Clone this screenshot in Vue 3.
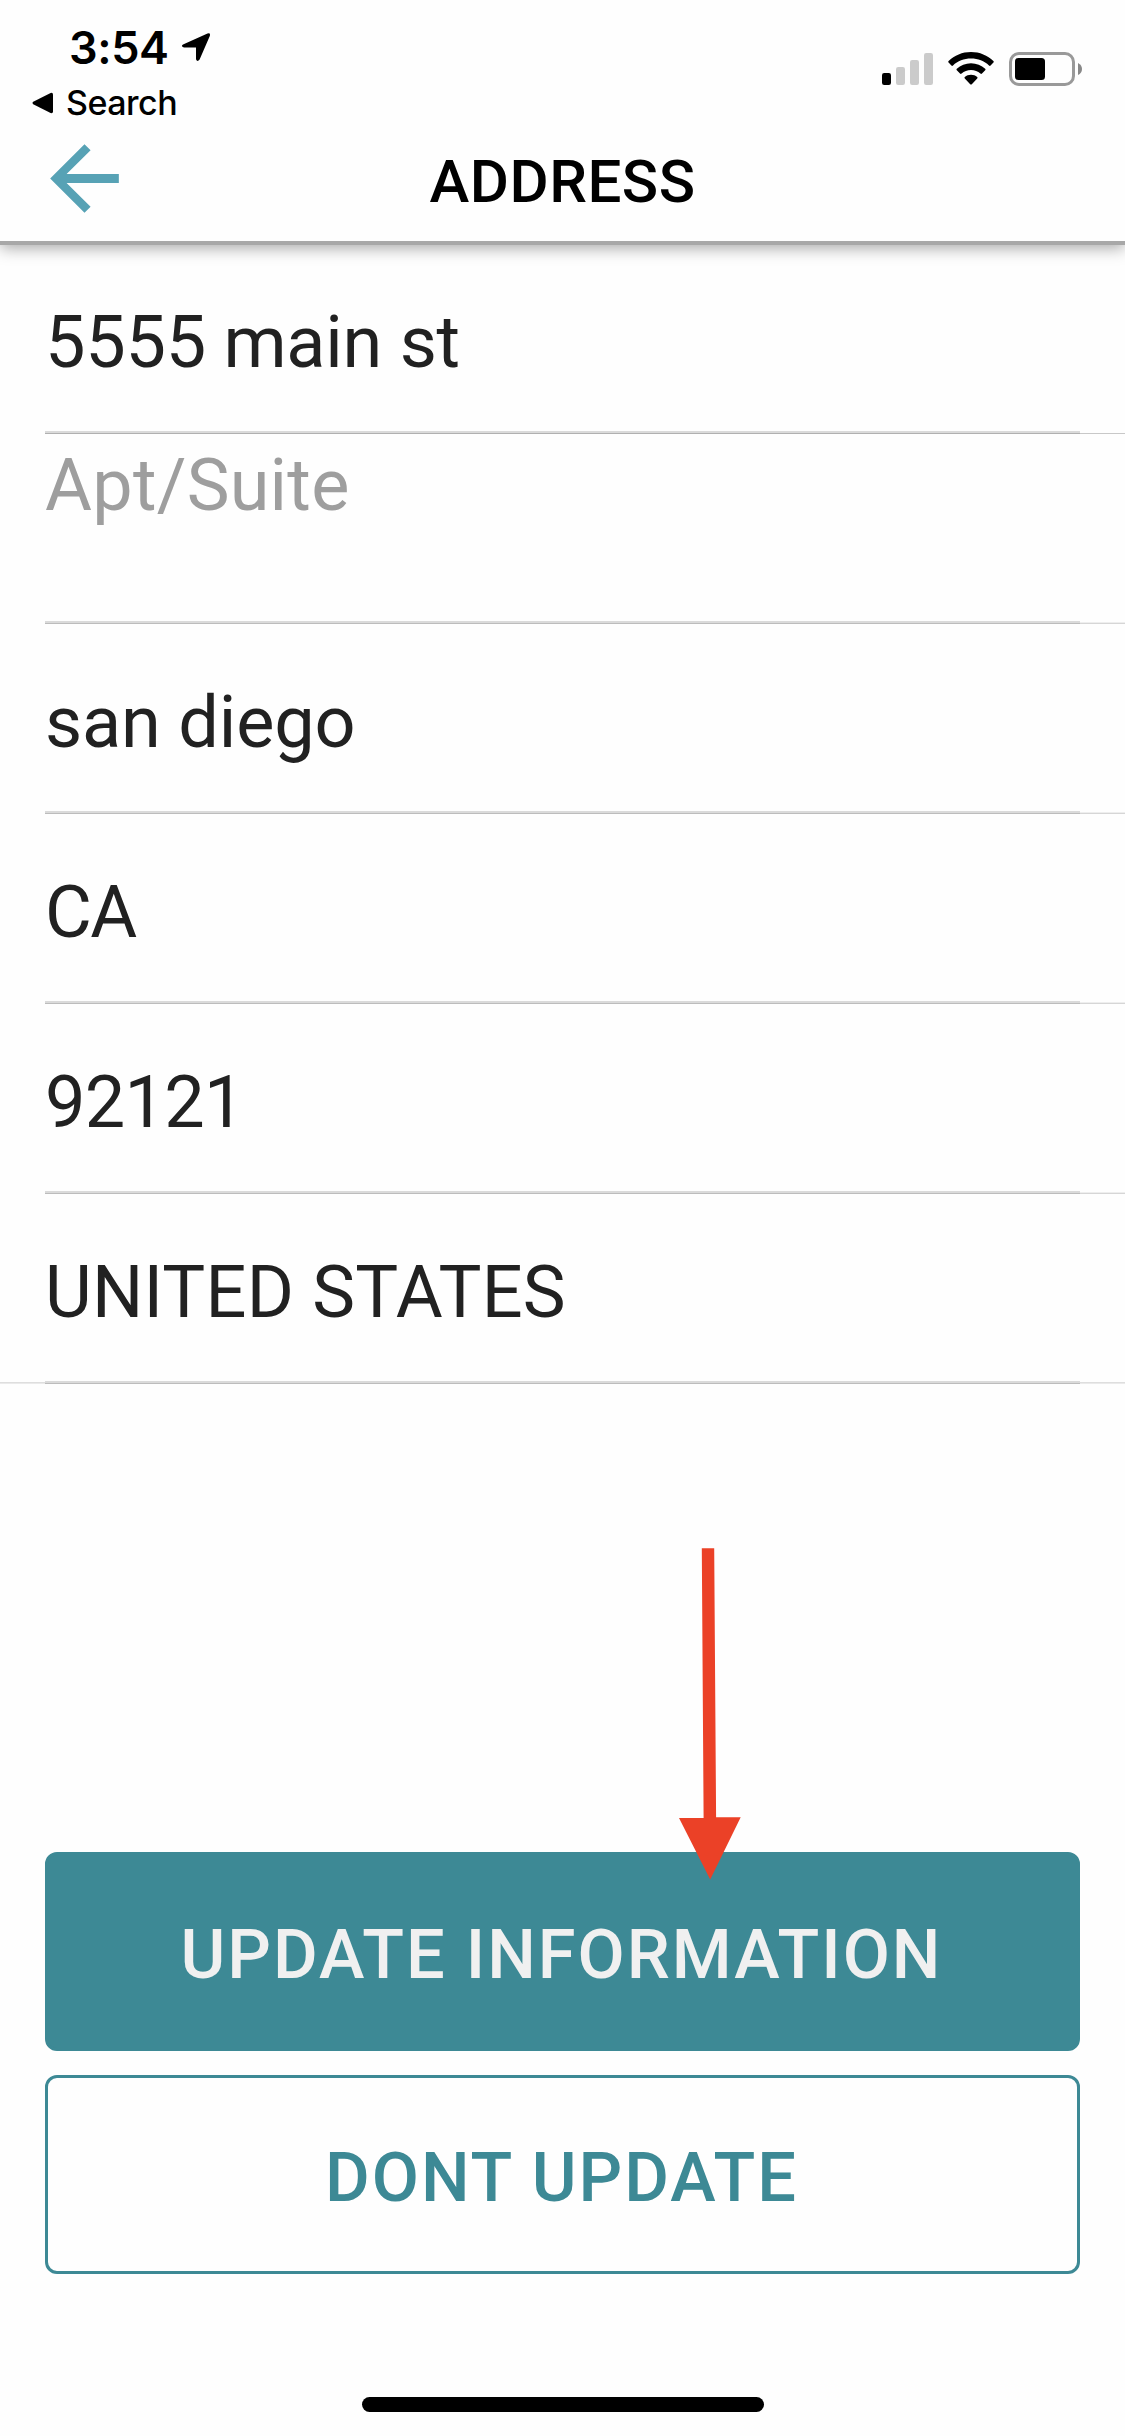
<script setup>
import { reactive } from 'vue'

const fields = reactive([
  { name: 'street', value: '5555 main st', placeholder: 'Address' },
  { name: 'suite', value: '', placeholder: 'Apt/Suite' },
  { name: 'city', value: 'san diego', placeholder: 'City' },
  { name: 'state', value: 'CA', placeholder: 'State' },
  { name: 'zip', value: '92121', placeholder: 'Zip' },
  { name: 'country', value: 'UNITED STATES', placeholder: 'Country' },
])
</script>

<template>
  <div class="screen">
    <header class="header">
      <div class="status-bar">
        <div class="status-left">
          <div class="clock">
            <span class="time">3:54</span>
            <svg class="location" width="30" height="30" viewBox="0 0 30 30">
              <path
                d="M2 12.4 26.5 1.6Q29.8.6 28.8 4L18.6 27.5Q16.2 30.6 15 27.2V15.5H3Q-.6 14.4 2 12.4Z"
              />
            </svg>
          </div>
          <div class="back-app">
            <svg class="triangle" width="22" height="22" viewBox="0 0 22 22">
              <path d="M1.2 9.8 18.6.9Q21 .3 21 2.5v17Q21 21.7 18.6 21.1L1.2 12.2Q-.2 11 1.2 9.8Z" />
            </svg>
            <span class="search">Search</span>
          </div>
        </div>
        <div class="status-right">
          <svg class="signal" width="51" height="34" viewBox="0 0 51 34">
            <rect x="0" y="21" width="9" height="12" rx="2.2" />
            <g fill="#cbcbcb">
              <rect x="14" y="15" width="9" height="18" rx="2.2" />
              <rect x="28" y="8" width="9" height="25" rx="2.2" />
              <rect x="42" y="1" width="9" height="32" rx="2.2" />
            </g>
          </svg>
          <svg class="wifi" width="46" height="34" viewBox="0 0 46 34">
            <path
              d="M23 0C31.7 0 39.6 3.4 45.4 9Q46.2 9.8 45.4 10.6L42.6 13.5Q41.8 14.3 41 13.5C36.3 9.2 30 6.6 23 6.6S9.7 9.2 5 13.5Q4.2 14.3 3.4 13.5L.6 10.6Q-.2 9.8.6 9C6.4 3.4 14.3 0 23 0Z"
            />
            <path
              d="M23 11.2C28.5 11.2 33.4 13.3 37.2 16.7Q38 17.5 37.2 18.3L34 21.6Q33.2 22.3 32.4 21.6C29.9 19.4 26.6 18 23 18S16.1 19.4 13.6 21.6Q12.8 22.3 12 21.6L8.800 18.3Q8 17.5 8.800 16.7C12.6 13.3 17.5 11.2 23 11.2Z"
            />
            <path
              d="M23 22.8C25.5 22.8 27.5 23.6 29.2 24.9Q30 25.7 29.2 26.5L23.8 32.2Q23 33 22.2 32.2L16.8 26.5Q16 25.7 16.8 24.9C18.5 23.6 20.5 22.8 23 22.8Z"
            />
          </svg>
          <svg class="battery" width="74" height="34" viewBox="0 0 74 34">
            <rect x="1.5" y="1.5" width="63" height="31" rx="8.5" fill="none" stroke="#999" stroke-width="3" />
            <rect x="6" y="6" width="30" height="22" rx="3.5" />
            <path d="M69 11Q73 13 73 17T69 23Z" fill="#888" />
          </svg>
        </div>
      </div>
      <div class="nav-bar">
        <button type="button" class="back" aria-label="Back">
          <svg width="103" height="103" viewBox="0 0 24 24">
            <path d="M20 10.93H7.83l5.59-5.53L12 4l-8 8 8 8 1.42-1.4L7.83 13.07H20z" />
          </svg>
        </button>
        <h1 class="title">ADDRESS</h1>
      </div>
    </header>

    <form class="fields" @submit.prevent>
      <label
        v-for="field in fields"
        :key="field.name"
        :class="['row', field.name, { empty: !field.value }]"
      >
        <span class="text">{{ field.value || field.placeholder }}</span>
        <span class="rule"></span>
      </label>
    </form>

    <div class="actions">
      <button type="button" class="btn primary">UPDATE INFORMATION</button>
      <button type="button" class="btn outline">DONT UPDATE</button>
      <svg class="pointer" width="62" height="332" viewBox="0 0 62 332">
        <path d="M22.8.3H35.2L37.1 269.3H61.7L31.2 331.5L0 269.9H24.6Z" />
      </svg>
    </div>

    <div class="home-indicator"></div>
  </div>
</template>

<style>
html,
body {
  margin: 0;
  background: #fefefe;
}
</style>

<style scoped>
.screen {
  display: flex;
  flex-direction: column;
  width: 1125px;
  height: 2436px;
  overflow: hidden;
  background: #fefefe;
  color: #000;
  font-family: Roboto, 'Liberation Sans', sans-serif;
}

.header {
  position: relative;
  z-index: 1;
  box-sizing: border-box;
  flex: none;
  height: 245px;
  border-bottom: 4px solid #a8a8a8;
  background: #fefefe;
  box-shadow: 0 3px 15px rgba(0, 0, 0, 0.35);
}

.status-bar {
  display: flex;
  justify-content: space-between;
  height: 126px;
  font-family: Inter, 'Liberation Sans', sans-serif;
}

.status-left {
  padding: 21px 0 0 32px;
}

.clock {
  display: flex;
  align-items: flex-start;
  height: 54px;
  padding-left: 37px;
  line-height: 54px;
}

.time {
  width: 112px;
  font-size: 45px;
  font-weight: 600;
  letter-spacing: -0.4px;
}

.location {
  margin-top: 11px;
}

.back-app {
  display: flex;
  align-items: center;
  height: 56px;
  line-height: 56px;
}

.search {
  margin-left: 12px;
  font-size: 34px;
  font-weight: 500;
  letter-spacing: -0.5px;
}

.status-right {
  display: flex;
  align-items: flex-start;
  padding: 52px 42px 0 0;
}

.wifi {
  margin-left: 15px;
}

.battery {
  margin-left: 15px;
}

.nav-bar {
  display: grid;
  grid-template-columns: 250px 1fr 250px;
  align-items: center;
  height: 105px;
}

.back {
  width: 103px;
  height: 103px;
  margin-left: 33px;
  padding: 0;
  border: 0;
  background: none;
  fill: #57a2b5;
}

.title {
  margin: 7px 0 0;
  font-size: 60px;
  font-weight: 500;
  line-height: 72px;
  letter-spacing: 0.5px;
  text-align: center;
}

.fields {
  flex: none;
  margin-top: -1px;
}

.row {
  display: flex;
  flex-direction: column;
  justify-content: space-between;
  box-sizing: border-box;
  height: 190px;
  padding: 57px 0 0 45px;
}

.row.empty {
  padding-top: 10px;
}

.text {
  color: #212121;
  font-size: 72px;
  line-height: 84px;
}

.street .text {
  letter-spacing: -0.25px;
}

.city .text {
  letter-spacing: -0.15px;
}

.state .text {
  letter-spacing: -1.5px;
}

.zip .text {
  letter-spacing: -0.7px;
}

.suite .text,
.country .text {
  letter-spacing: 0.25px;
}

.row.empty .text {
  color: #9e9e9e;
}

/* the hairline runs on past the inset rule to the screen edge */
.rule {
  box-sizing: border-box;
  width: 1035px;
  height: 3px;
  border-bottom: 1px solid #bcbcbc;
  background: #dadada;
  box-shadow: 46px 1px 0 -1px #d6d6d6, 46px 0 0 -1px #eee;
}

.row:first-child .rule {
  border-bottom-color: #b0b0b0;
  box-shadow: 46px 1px 0 -1px #c8c8c8;
}

.row:last-child .rule {
  box-shadow: 46px 0 0 -1px #dedede, -46px 0 0 -1px #dedede,
    46px 1px 0 -1px #eaeaea, -46px 1px 0 -1px #eaeaea;
}

.actions {
  position: relative;
  display: flex;
  flex-direction: column;
  gap: 24px;
  margin-top: 468px;
  padding: 0 45px;
}

.btn {
  box-sizing: border-box;
  height: 199px;
  padding: 5px 2px 0 0;
  border: 3px solid #3d8995;
  border-radius: 12px;
  font-family: inherit;
  font-size: 68.5px;
  font-weight: 500;
  letter-spacing: 2px;
}

.primary {
  background: #3d8995;
  color: #f0f0f0;
}

.outline {
  background: transparent;
  color: #3d8995;
}

/* arrow pointing at the primary button */
.pointer {
  position: absolute;
  top: -304px;
  left: 679px;
  fill: #eb4127;
}

.home-indicator {
  flex: none;
  width: 402px;
  height: 15px;
  margin: 123px auto 0;
  border-radius: 8px;
  background: #000;
}
</style>
